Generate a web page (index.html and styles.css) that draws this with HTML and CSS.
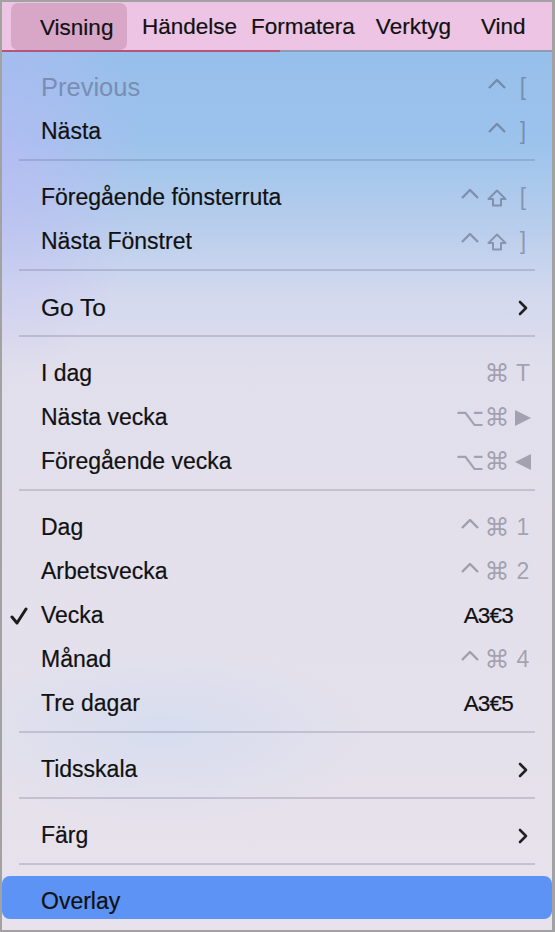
FILE: index.html
```html
<!DOCTYPE html>
<html lang="sv">
<head>
    <meta charset="UTF-8">
    <meta name="viewport" content="width=device-width, initial-scale=1.0">
    <title>Visning</title>
    <link rel="stylesheet" href="styles.css">
</head>
<body>
    <div class="frame">
        <div class="menubar">
            <div class="menubar-item active">Visning</div>
            <div class="menubar-item m-event">Händelse</div>
            <div class="menubar-item m-format">Formatera</div>
            <div class="menubar-item m-tools">Verktyg</div>
            <div class="menubar-item m-window">Vind</div>
        </div>

        <div class="menu">
            <div class="item disabled big">
                <span class="check"></span>
                <span class="label">Previous</span>
                <span class="keys"><span class="k"></span><span class="k"><svg class="caret" viewBox="0 0 18 10"><polyline points="1,9 9,1 17,9"/></svg></span><span class="k last">[</span></span>
            </div>
            <div class="item">
                <span class="check"></span>
                <span class="label">Nästa</span>
                <span class="keys"><span class="k"></span><span class="k"><svg class="caret" viewBox="0 0 18 10"><polyline points="1,9 9,1 17,9"/></svg></span><span class="k last">]</span></span>
            </div>

            <div class="sep"></div>

            <div class="item">
                <span class="check"></span>
                <span class="label">Föregående fönsterruta</span>
                <span class="keys"><span class="k"><svg class="caret" viewBox="0 0 18 10"><polyline points="1,9 9,1 17,9"/></svg></span><span class="k"><svg class="shift" viewBox="0 0 20 18"><path d="M10 1.5 L18.5 10 H14 V16.5 H6 V10 H1.5 Z"/></svg></span><span class="k last">[</span></span>
            </div>
            <div class="item">
                <span class="check"></span>
                <span class="label">Nästa Fönstret</span>
                <span class="keys"><span class="k"><svg class="caret" viewBox="0 0 18 10"><polyline points="1,9 9,1 17,9"/></svg></span><span class="k"><svg class="shift" viewBox="0 0 20 18"><path d="M10 1.5 L18.5 10 H14 V16.5 H6 V10 H1.5 Z"/></svg></span><span class="k last">]</span></span>
            </div>

            <div class="sep"></div>

            <div class="item">
                <span class="check"></span>
                <span class="label goto">Go To</span>
                <svg class="chevron" viewBox="0 0 10 16"><polyline points="2,2 8,8 2,14"/></svg>
            </div>

            <div class="sep"></div>

            <div class="item">
                <span class="check"></span>
                <span class="label">I dag</span>
                <span class="keys"><span class="k"></span><span class="k sym">⌘</span><span class="k last">T</span></span>
            </div>
            <div class="item">
                <span class="check"></span>
                <span class="label">Nästa vecka</span>
                <span class="keys"><span class="k sym">⌥</span><span class="k sym">⌘</span><span class="k last"><svg class="tri" viewBox="0 0 14 14"><path d="M0 0 L14 7 L0 14 Z"/></svg></span></span>
            </div>
            <div class="item">
                <span class="check"></span>
                <span class="label">Föregående vecka</span>
                <span class="keys"><span class="k sym">⌥</span><span class="k sym">⌘</span><span class="k last"><svg class="tri" viewBox="0 0 14 14"><path d="M14 0 L0 7 L14 14 Z"/></svg></span></span>
            </div>

            <div class="sep"></div>

            <div class="item">
                <span class="check"></span>
                <span class="label">Dag</span>
                <span class="keys"><span class="k"><svg class="caret" viewBox="0 0 18 10"><polyline points="1,9 9,1 17,9"/></svg></span><span class="k sym">⌘</span><span class="k last">1</span></span>
            </div>
            <div class="item">
                <span class="check"></span>
                <span class="label">Arbetsvecka</span>
                <span class="keys"><span class="k"><svg class="caret" viewBox="0 0 18 10"><polyline points="1,9 9,1 17,9"/></svg></span><span class="k sym">⌘</span><span class="k last">2</span></span>
            </div>
            <div class="item">
                <span class="check"><svg viewBox="0 0 18 18"><polyline points="2,10 7,16 16,2"/></svg></span>
                <span class="label">Vecka</span>
                <span class="raw">A3€3</span>
            </div>
            <div class="item">
                <span class="check"></span>
                <span class="label">Månad</span>
                <span class="keys"><span class="k"><svg class="caret" viewBox="0 0 18 10"><polyline points="1,9 9,1 17,9"/></svg></span><span class="k sym">⌘</span><span class="k last">4</span></span>
            </div>
            <div class="item">
                <span class="check"></span>
                <span class="label">Tre dagar</span>
                <span class="raw">A3€5</span>
            </div>

            <div class="sep"></div>

            <div class="item">
                <span class="check"></span>
                <span class="label">Tidsskala</span>
                <svg class="chevron" viewBox="0 0 10 16"><polyline points="2,2 8,8 2,14"/></svg>
            </div>

            <div class="sep"></div>

            <div class="item">
                <span class="check"></span>
                <span class="label">Färg</span>
                <svg class="chevron" viewBox="0 0 10 16"><polyline points="2,2 8,8 2,14"/></svg>
            </div>

            <div class="sep"></div>

            <div class="item selected">
                <span class="check"></span>
                <span class="label">Overlay</span>
            </div>
        </div>
    </div>
</body>
</html>
```

FILE: styles.css
```css
html, body {
    margin: 0;
    padding: 0;
}

body {
    font-family: "Liberation Sans", Arial, sans-serif;
    color: #111;
}

.frame {
    width: 555px;
    height: 932px;
    box-sizing: border-box;
    border: 2px solid #a2a2a2;
    border-right-width: 3px;
    overflow: hidden;
    background: #e7e2ea;
}

/* top menu bar */
.menubar {
    display: flex;
    align-items: center;
    height: 48px;
    padding-left: 9px;
    background: #edc4e3;
    font-size: 22.5px;
    border-bottom: 2px solid #8f9bb0;
    position: relative;
    -webkit-text-stroke: 0.2px #111;
}

.menubar::after {
    content: "";
    position: absolute;
    left: 0;
    bottom: -2px;
    width: 278px;
    height: 2px;
    background: #b4557c;
}

.menubar-item {
    height: 47px;
    display: flex;
    align-items: center;
    padding-top: 2px;
    box-sizing: border-box;
}

.menubar-item.active {
    margin-top: 1px;
    width: 116px;
    padding-left: 29px;
    background: #d8a7c8;
    border-radius: 7px;
}

.m-event { margin-left: 15px; }
.m-format { margin-left: 14px; }
.m-tools { margin-left: 21px; }
.m-window { margin-left: 30px; }

/* dropdown */
.menu {
    height: 878px;
    padding-top: 11px;
    box-sizing: border-box;
    background:
        radial-gradient(ellipse 140px 220px at 0 110px, rgba(196, 184, 246, 0.55), rgba(196, 184, 246, 0)),
        radial-gradient(ellipse 220px 90px at 160px 680px, rgba(205, 218, 242, 0.6), rgba(205, 218, 242, 0)),
        linear-gradient(180deg, #96bfeb 0px, #9cc3ec 90px, #b6cdec 170px, #d2d8ee 240px, #e1dfec 320px, #e7e2eb 100%);
}

.item {
    display: grid;
    grid-template-columns: 32px 1fr auto;
    align-items: center;
    height: 44px;
    padding: 5px 20px 0 7px;
    box-sizing: border-box;
    font-size: 23px;
}

.label {
    -webkit-text-stroke: 0.2px #111;
}

.label.goto {
    font-size: 24.5px;
}

.item.big .label {
    font-size: 25.5px;
}

.item.disabled .label {
    color: #7a8db2;
    -webkit-text-stroke: 0;
}

.check svg {
    display: block;
    width: 18px;
    height: 18px;
    margin-left: 1px;
    fill: none;
    stroke: #1c1c1c;
    stroke-width: 3;
    stroke-linecap: round;
    stroke-linejoin: round;
}

.keys {
    display: flex;
    align-items: center;
    color: rgba(60, 60, 80, 0.4);
    font-size: 23px;
}

.k {
    width: 24px;
    height: 26px;
    display: flex;
    align-items: center;
    justify-content: center;
    flex-shrink: 0;
}

.k + .k {
    margin-left: 3px;
}

.k.last {
    width: 18px;
    margin-left: 5px;
}

.k.sym {
    font-family: "DejaVu Sans", sans-serif;
    font-size: 25px;
}

.caret {
    width: 18px;
    height: 10px;
    margin-bottom: 8px;
    flex-shrink: 0;
    fill: none;
    stroke: rgba(60, 60, 80, 0.4);
    stroke-width: 2.4;
}

.shift {
    width: 20px;
    height: 18px;
    flex-shrink: 0;
    fill: none;
    stroke: rgba(60, 60, 80, 0.4);
    stroke-width: 2;
    stroke-linejoin: round;
}

.tri {
    display: block;
    width: 16px;
    height: 16px;
    flex: 0 0 16px;
    fill: rgba(60, 60, 80, 0.38);
}

.raw {
    font-size: 22.5px;
    letter-spacing: -0.8px;
    margin-right: 19px;
    color: #111;
    -webkit-text-stroke: 0.2px #111;
}

.chevron {
    width: 10px;
    height: 16px;
    margin-right: 4px;
    fill: none;
    stroke: #222;
    stroke-width: 2.6;
    stroke-linecap: round;
    stroke-linejoin: round;
}

.sep {
    height: 2px;
    margin: 8px 17px 12px;
    background: rgba(100, 96, 130, 0.25);
}

.item.selected {
    height: 43px;
    margin-top: -1px;
    padding-top: 8px;
    background: #5c93f5;
    border-radius: 8px;
}
```
